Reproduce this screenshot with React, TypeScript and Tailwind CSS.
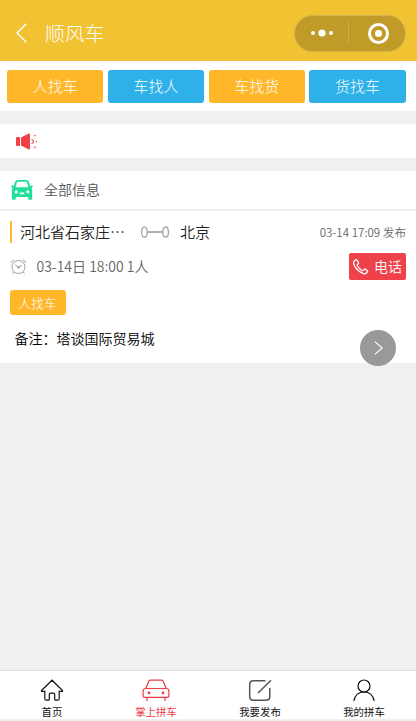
import type { ReactNode } from "react";

const modes = [
    { label: "人找车", color: "bg-[#ffb729]" },
    { label: "车找人", color: "bg-[#2eb1e8]" },
    { label: "车找货", color: "bg-[#ffb729]" },
    { label: "货找车", color: "bg-[#2eb1e8]" },
];

function Header() {
    return (
        <header className="flex h-[61px] shrink-0 items-center bg-[#f1c232] pt-[5px] pr-[11px] pl-4">
            <svg className="h-5 w-[11px]" viewBox="0 0 11 20" fill="none" stroke="#fff" strokeWidth="1.4">
                <path d="M10.3 .8 1 10l9.3 9.2" />
            </svg>
            <h1 className="ml-[18px] text-[19.8px] leading-none font-light text-white">顺风车</h1>
            <div className="ml-auto flex h-[37px] w-[112px] items-center rounded-full border border-[#d4b350] bg-[#c09b28]">
                <div className="flex flex-1 items-center justify-center">
                    <svg className="h-2 w-[22px]" viewBox="0 0 22 8" fill="#fff">
                        <circle cx="2" cy="4" r="2" />
                        <circle cx="11" cy="4" r="3.6" />
                        <circle cx="20" cy="4" r="2" />
                    </svg>
                </div>
                <div className="h-[22px] w-px bg-[#d0ae47]" />
                <div className="flex flex-1 items-center justify-center pl-[3px]">
                    <div className="flex h-[21px] w-[21px] items-center justify-center rounded-full border-3 border-white">
                        <span className="h-[7px] w-[7px] rounded-full bg-white" />
                    </div>
                </div>
            </div>
        </header>
    );
}

function HornIcon() {
    return (
        <svg className="h-[17px] w-[22px]" viewBox="0 0 22 17" fill="#ee4149">
            <rect x="0" y="4" width="4" height="9" rx="1" />
            <path d="M5 4.5 12.3.7q1.7-.7 1.7 1v13.6q0 1.7-1.7 1L5 12.5Z" />
            <path d="M15.4 6.5q2 .3 2 2t-2 2" fill="none" stroke="#ee4149" strokeWidth="1.1" />
            <circle cx="18.8" cy="2.6" r=".8" />
            <circle cx="20.5" cy="8.5" r=".7" />
            <circle cx="18.8" cy="14.4" r=".8" />
        </svg>
    );
}

function GreenCarIcon() {
    return (
        <svg className="h-5 w-[22px]" viewBox="0 0 22 20">
            <path
                fill="#1fdf9b"
                fillRule="evenodd"
                d="M7 0h8q2.4 0 3 2l1.2 4.2 1.1-.8h1.4v1.5l-1.4 1q.9 1 .9 2.2v8.4q0 1.2-1.2 1.2h-1.6q-1.2 0-1.2-1.2V17H4.8v1.500q0 1.200-1.200 1.200H2q-1.200 0-1.200-1.200v-8.400q0-1.200.9-2.200l-1.400-1V5.400h1.400l1.100.8L4 2q.6-2 3-2ZM7 1.800q-.9 0-1.200 1L4.600 7.300h12.800l-1.200-4.500q-.3-1-1.200-1ZM5.200 10.300a1.600 1.600 0 1 0 0 3.200 1.600 1.600 0 0 0 0-3.200Zm11.600 0a1.600 1.600 0 1 0 0 3.200 1.600 1.600 0 0 0 0-3.200ZM8.800 12.500v1.800h4.400v-1.800Z"
            />
        </svg>
    );
}

function ClockIcon() {
    return (
        <svg className="h-4 w-[17px]" viewBox="0 0 17 16" fill="none" stroke="#949494" strokeWidth=".9">
            <circle cx="8.5" cy="8" r="6.5" />
            <path d="M5.2 5.7 8.5 8.8l3.3-2.6M1 3.900Q1.700 1.700 4 1.100M16 3.900q-.7-2.200-3-2.800M4 13.100l-1.600 1.700M13 13.100l1.600 1.700" />
            <circle cx="8.5" cy="8.4" r="1" />
        </svg>
    );
}

function RouteIcon() {
    return (
        <svg className="h-3 w-7" viewBox="0 0 28 12" fill="none" stroke="#9b9b9b" strokeWidth="1.2">
            <ellipse cx="3.4" cy="6" rx="2.8" ry="5.2" />
            <ellipse cx="24.6" cy="6" rx="2.8" ry="5.2" />
            <path d="M6.2 6h15.6" strokeWidth="1.6" />
        </svg>
    );
}

function PhoneIcon() {
    return (
        <svg className="h-4 w-4" viewBox="0 0 16 16" fill="none" stroke="#fff" strokeWidth="1.3" strokeLinejoin="round">
            <path d="M1 2.5 2.5 1q.8-.6 1.5.1l1.5 2.4q.4.8-.2 1.3l-.9.8q-.4.5 0 1.2 1.8 3.2 4.7 4.7.7.4 1.200-.1l.9-1q.6-.6 1.300-.2l1.600 1.200q.8.7.1 1.500l-1.100 1.400q-1 .9-2.600.4Q3.400 12 .7 5.100.2 3.500 1 2.500Z" />
        </svg>
    );
}

function Tab({ label, active, children }: { label: string; active?: boolean; children: ReactNode }) {
    return (
        <div
            className={
                active
                    ? "flex flex-1 flex-col items-center pt-2 text-[#ee3a45]"
                    : "flex flex-1 flex-col items-center pt-2 text-[#111]"
            }
        >
            <svg className="h-[23px] w-7" viewBox="0 0 28 23" fill="none" stroke="currentColor" strokeWidth="1.2">
                {children}
            </svg>
            <span className="mt-[4px] text-[10.4px] leading-[12px] font-normal">{label}</span>
        </div>
    );
}

export default function App() {
    return (
        <div className="flex h-[721px] w-[417px] flex-col overflow-hidden bg-[#f0f0f0] font-['Noto_Sans_CJK_SC',sans-serif] font-[350]">
            <Header />
            <div className="flex min-h-0 flex-1 flex-col border-r border-[#d3d3d3]">
                <div className="flex h-[50px] shrink-0 gap-[4.4px] bg-white pt-[9px] pl-[7px]">
                    {modes.map((m) => (
                        <button
                            key={m.label}
                            className={`${m.color} h-[33px] w-[96.4px] rounded-[3px] pb-[2px] text-[15px] leading-[31px] font-light text-white`}
                        >
                            {m.label}
                        </button>
                    ))}
                </div>

                <div className="mt-[13px] flex h-[34px] shrink-0 items-center bg-white pl-4">
                    <HornIcon />
                </div>

                <div className="mt-[13px] flex h-10 shrink-0 items-center border-b-2 border-[#efefef] bg-white pl-[11px]">
                    <GreenCarIcon />
                    <span className="ml-[11px] pb-[2px] text-[14px] leading-none text-[#555]">全部信息</span>
                </div>

                <section className="h-[152px] shrink-0 bg-white pt-[10px] pr-[10px] pl-[9.500px]">
                    <div className="flex h-[22px] items-center">
                        <span className="h-[22px] w-[2.5px] bg-[#ffb729]" />
                        <span className="ml-[8px] w-[108px] text-[15px] text-[#222]">河北省石家庄⋯</span>
                        <span className="ml-[13px]">
                            <RouteIcon />
                        </span>
                        <span className="ml-[11px] text-[15px] text-[#222]">北京</span>
                        <span className="ml-auto pt-[2px] text-[11.6px] text-[#666]">03-14 17:09 发布</span>
                    </div>
                    <div className="mt-[10px] flex h-[27px] items-center">
                        <ClockIcon />
                        <span className="ml-[10px] text-[14px] text-[#666]">03-14日 18:00 1人</span>
                        <button className="ml-auto flex h-[27px] w-[57px] items-center justify-center gap-[5px] rounded-[2px] bg-[#ee4149] text-[14px] font-[350] text-white">
                            <PhoneIcon />
                            电话
                        </button>
                    </div>
                    <div className="mt-[10px] h-[25px] w-[56px] rounded-[3px] bg-[#ffb729] text-center text-[12.8px] leading-[25px] font-light text-white">
                        人找车
                    </div>
                    <div className="flex items-start">
                        <p className="mt-[13px] ml-[5px] text-[14px] leading-[20px] text-black">
                            备注：塔谈国际贸易城
                        </p>
                        <button className="mt-[15px] mr-[10px] ml-auto flex h-9 w-9 items-center justify-center rounded-full bg-[#999]">
                            <svg className="h-[14px] w-[9px]" viewBox="0 0 9 14" fill="none" stroke="#fff" strokeWidth="1.1">
                                <path d="m.8.6 7.4 6.4-7.4 6.4" />
                            </svg>
                        </button>
                    </div>
                </section>

                <nav className="mt-auto flex h-[51px] shrink-0 border-t border-b-2 border-t-[#dedede] border-b-[#f0f0f0] bg-white">
                    <Tab label="首页">
                        <path d="M14 1.2 3.5 11.6v.8h3.3v7q0 1.8 1.4 1.8h2.2q.9 0 .9-1v-4.600q0-1.500 1.400-1.500h2.600q1.400 0 1.400 1.500v4.600q0 1 .9 1h2.200q1.400 0 1.400-1.800v-7h3.300v-.8Z" />
                    </Tab>
                    <Tab label="掌上拼车" active>
                        <path d="M3.8 9.5 6.6 2.5Q7 1.2 8.5 1.2h11q1.5 0 1.9 1.3l2.8 7M3.8 9.5h20.400q2.700.2 2.700 2.500v5q0 1.400-1.400 1.400h-23q-1.400 0-1.400-1.400v-5q0-2.300 2.700-2.500ZM5 18.500V22M23 18.500V22" />
                        <circle cx="7" cy="14" r=".8" fill="currentColor" />
                        <circle cx="21" cy="14" r=".8" fill="currentColor" />
                    </Tab>
                    <Tab label="我要发布">
                        <path
                            stroke="#555"
                            strokeWidth="1.5"
                            d="M19.5 1.7H7.5Q3.7 1.7 3.7 5.5v12q0 3.8 3.8 3.8h12.5q3.8 0 3.8-3.8V9M12 14 25 1.3"
                        />
                    </Tab>
                    <Tab label="我的拼车">
                        <circle cx="14" cy="7" r="6" />
                        <path d="M3.8 21.8Q5.8 13 14 13t10.2 8.8" />
                    </Tab>
                </nav>
            </div>
        </div>
    );
}
